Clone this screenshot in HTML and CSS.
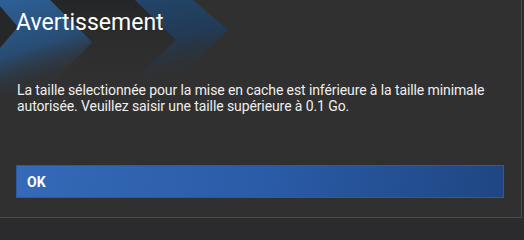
FILE: index.html
```html
<!DOCTYPE html>
<html lang="fr">
<head>
<meta charset="utf-8">
<title>Avertissement</title>
<link rel="stylesheet" href="styles.css">
</head>
<body>
<div class="window">
  <div class="dialog">
    <header class="header">
      <svg class="header-art" width="280" height="100" viewBox="0 0 280 100" aria-hidden="true">
        <defs>
          <linearGradient id="ga" x1="0" y1="0" x2="0.3" y2="1">
            <stop offset="0" stop-color="#2d6097"/>
            <stop offset="0.55" stop-color="#284d74"/>
            <stop offset="1" stop-color="#303030" stop-opacity="0"/>
          </linearGradient>
          <linearGradient id="gb" x1="0" y1="0" x2="0.2" y2="1">
            <stop offset="0" stop-color="#22456a"/>
            <stop offset="0.5" stop-color="#223a54"/>
            <stop offset="1" stop-color="#303030" stop-opacity="0"/>
          </linearGradient>
          <linearGradient id="gd" x1="0" y1="0" x2="0" y2="1">
            <stop offset="0" stop-color="#242526"/>
            <stop offset="1" stop-color="#303030" stop-opacity="0"/>
          </linearGradient>
        </defs>
        <polygon points="0,0 0,6 18,27 0,48 0,0" fill="#262729"/>
        <polygon points="50,0 135,0 176,40 120,96 55,96 92,42" fill="url(#gd)"/>
        <polygon points="0,6 0,0 50,0 92,42 40,96 0,96 0,48 18,27" fill="url(#ga)"/>
        <polygon points="135,0 193,0 228,30 170,88 125,88 176,40" fill="url(#gb)"/>
      </svg>
      <h1 class="title">Avertissement</h1>
    </header>
    <p class="message">La taille sélectionnée pour la mise en cache est inférieure à la taille minimale autorisée. Veuillez saisir une taille supérieure à 0.1 Go.</p>
    <div class="actions">
      <button class="btn" type="button">OK</button>
    </div>
  </div>
</div>
</body>
</html>
```

FILE: styles.css
```css
html, body {
  margin: 0;
  padding: 0;
  background: #2b2b2d;
}
body {
  width: 524px;
  height: 218px;
  overflow: hidden;
  font-family: Roboto, "Noto Sans", sans-serif;
}
.window {
  width: 521px;
  height: 217px;
  border-right: 1px solid #4a4b50;
  border-bottom: 1px solid #4a4b50;
  background: #303030;
}
.dialog {
  display: flex;
  flex-direction: column;
  height: 100%;
}
.header {
  position: relative;
  height: 56px;
}
.header-art {
  position: absolute;
  left: 0;
  top: 0;
}
.title {
  position: relative;
  margin: 0;
  padding: 8px 0 0 16px;
  font-size: 23px;
  line-height: 30px;
  font-weight: 400;
  color: #ffffff;
}
.message {
  position: relative;
  margin: 26px 0 0;
  padding: 0 17px;
  font-size: 14px;
  line-height: 16px;
  letter-spacing: -0.1px;
  color: #eeeeee;
}
.actions {
  padding: 0 17px 0 16px;
  margin-top: 51px;
}
.btn {
  display: block;
  width: 488px;
  height: 33px;
  margin: 0;
  padding: 0 10px;
  border: 1px solid #2a5aa0;
  background: linear-gradient(100deg, #346ab8 0%, #2a5ca8 50%, #1f4683 100%);
  color: #ffffff;
  font-family: Roboto, "Noto Sans", sans-serif;
  font-size: 14px;
  font-weight: 700;
  text-align: left;
}
```
